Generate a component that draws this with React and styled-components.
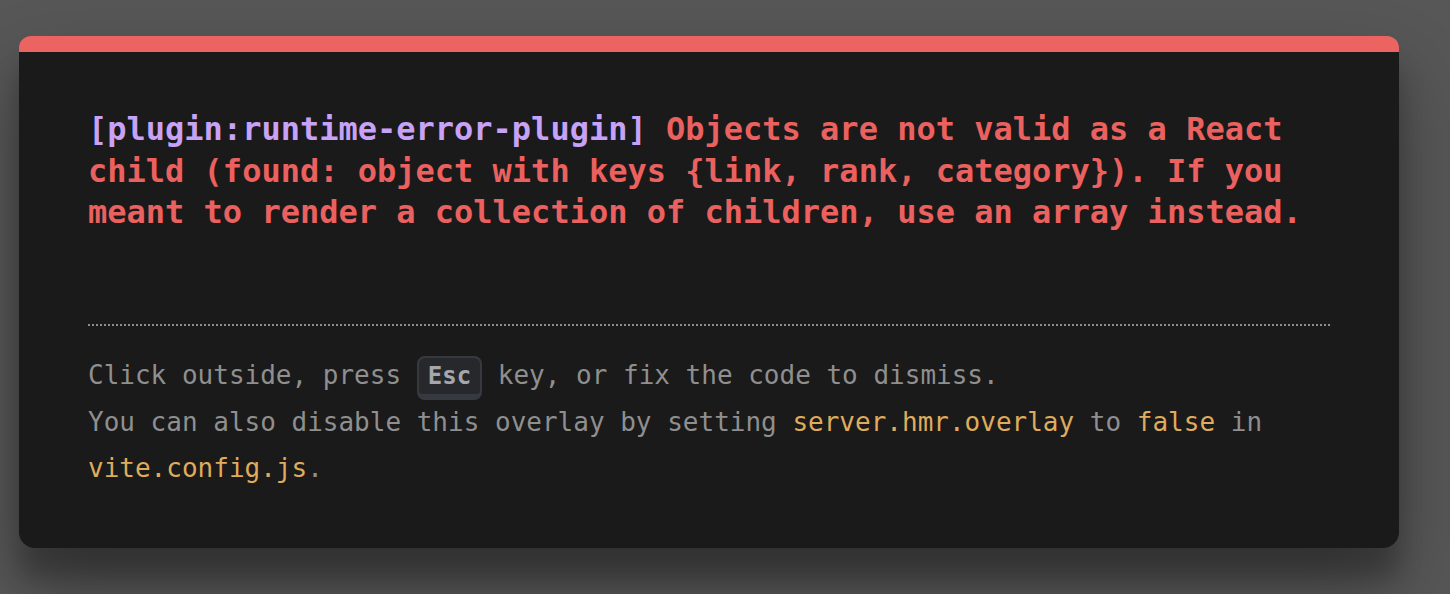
import React from "react";
import styled, { createGlobalStyle } from "styled-components";

const Global = createGlobalStyle`
  html, body { margin: 0; padding: 0; }
  body {
    background: #575757;
    font-family: "DejaVu Sans Mono", "Liberation Mono", monospace;
  }
`;

const Backdrop = styled.div`
  min-height: 594px;
  box-sizing: border-box;
  padding: 36px 51px 0 19px;
  background: #575757;
`;

const Window = styled.div`
  box-sizing: border-box;
  width: 1380px;
  background: #1a1a1a;
  border-top: 16px solid #ec6461;
  border-radius: 12px 12px 16px 16px;
  padding: 57px 69px 56px;
  box-shadow: 0 38px 76px rgba(0, 0, 0, 0.3), 0 30px 24px rgba(0, 0, 0, 0.22);
  line-height: 1.5;
`;

const Message = styled.pre`
  margin: 0 0 90px;
  font-family: "DejaVu Sans Mono", "Liberation Mono", monospace;
  font-size: 32px;
  line-height: 1.3;
  font-weight: 700;
  white-space: pre-wrap;
  color: #ea615f;
`;

const Plugin = styled.span`
  color: #c8a2f6;
`;

const Tip = styled.div`
  border-top: 2px dotted #8e8e8e;
  padding-top: 26px;
  font-size: 26px;
  line-height: 46.8px;
  color: #8f8f8f;
`;

const Code = styled.code`
  font-family: inherit;
  color: #dfab5c;
`;

const Kbd = styled.kbd`
  font-family: "DejaVu Sans Mono", "Liberation Mono", monospace;
  font-size: 24px;
  font-weight: 700;
  line-height: 1.5;
  background: #26282c;
  color: #a6a7ab;
  padding: 4px 9px 4px;
  border-radius: 8px;
  border-style: solid;
  border-color: #363940;
  border-width: 2px 2px 6px;
`;

export default function App() {
  return (
    <>
      <Global />
      <Backdrop>
        <Window>
          <Message>
            <Plugin>[plugin:runtime-error-plugin] </Plugin>
            Objects are not valid as a React child (found: object with keys {"{"}link, rank, category{"}"}). If you meant to render a collection of children, use an array instead.
          </Message>
          <Tip>
            Click outside, press <Kbd>Esc</Kbd> key, or fix the code to dismiss.
            <br />
            You can also disable this overlay by setting <Code>server.hmr.overlay</Code> to <Code>false</Code> in <Code>vite.config.js</Code>.
          </Tip>
        </Window>
      </Backdrop>
    </>
  );
}
